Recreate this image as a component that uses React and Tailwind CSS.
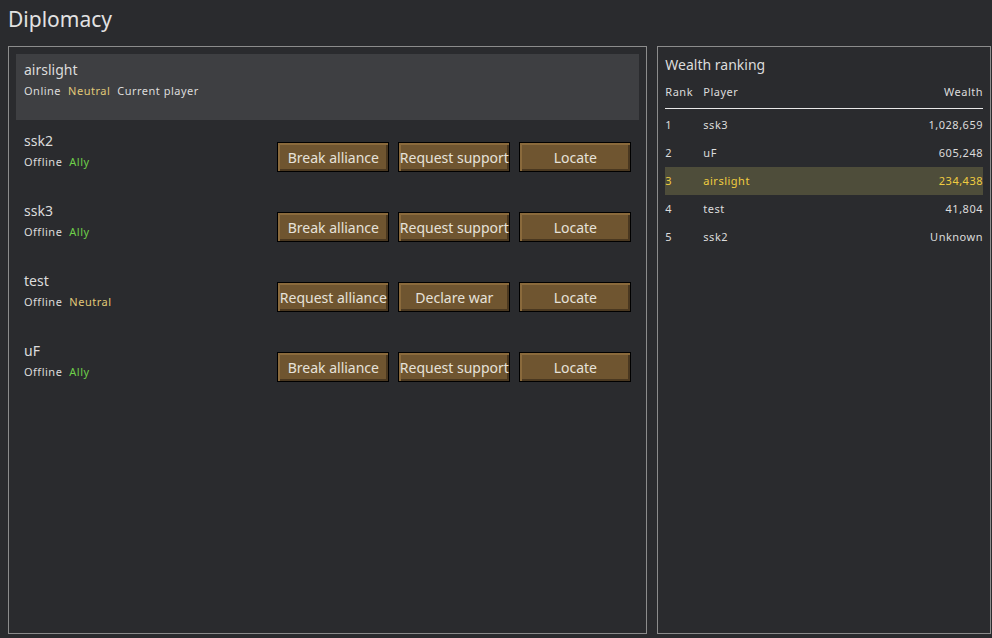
export default function App() {
  const players = [
    { name: "ssk2", rel: "Ally", btns: ["Break alliance", "Request support", "Locate"] },
    { name: "ssk3", rel: "Ally", btns: ["Break alliance", "Request support", "Locate"] },
    { name: "test", rel: "Neutral", btns: ["Request alliance", "Declare war", "Locate"] },
    { name: "uF", rel: "Ally", btns: ["Break alliance", "Request support", "Locate"] },
  ];
  const ranks = [
    ["1", "ssk3", "1,028,659"],
    ["2", "uF", "605,248"],
    ["3", "airslight", "234,438", true],
    ["4", "test", "41,804"],
    ["5", "ssk2", "Unknown"],
  ];
  const small = "text-[11px] font-['DejaVu_Sans',sans-serif] tracking-[0.5px]";
  return (
    <div className="w-[992px] h-[638px] bg-[#2a2b2e] text-[#dcdcdc] font-['Liberation_Sans',Arial,sans-serif] flex flex-col overflow-hidden">
      <div className="h-[46px] pl-[8px] pt-[6px] text-[21px] leading-[26px] text-[#e2e2e2]">Diplomacy</div>
      <div className="flex gap-[10px] pl-[8px] pr-[1px] h-[588px]">
        <div className="w-[640px] h-[588px] border border-[#8c8c8c] p-[7px] flex flex-col">
          <div className="h-[66px] bg-[#3e3f42] px-[8px] pt-[7px]">
            <div className="text-[14px] leading-[18px]">airslight</div>
            <div className={`${small} mt-[4px] flex gap-[7px]`}>
              <span>Online</span><span className="text-[#e0c878]">Neutral</span><span>Current player</span>
            </div>
          </div>
          {players.map((p) => (
            <div key={p.name} className="h-[70px] px-[8px] flex items-start">
              <div className="pt-[12px] flex-1">
                <div className="text-[14px] leading-[18px]">{p.name}</div>
                <div className={`${small} mt-[4px] flex gap-[7px]`}>
                  <span>Offline</span>
                  <span className={p.rel === "Ally" ? "text-[#6ed04a]" : "text-[#e0c878]"}>{p.rel}</span>
                </div>
              </div>
              <div className="flex gap-[9px] mt-[22px]">
                {p.btns.map((b) => (
                  <div key={b} className="w-[112px] h-[30px] border border-black bg-[#6f5530] shadow-[inset_2px_2px_0_#8a6a3c,inset_-2px_-2px_0_#4a3820] flex items-center justify-center text-[14px] text-[#e6e2da] whitespace-nowrap">{b}</div>
                ))}
              </div>
            </div>
          ))}
        </div>
        <div className="w-[334px] h-[588px] border border-[#8c8c8c] px-[7px] pt-[9px]">
          <div className="text-[14px] leading-[18px] text-[#dcdcdc]">Wealth ranking</div>
          <div className={`${small} flex h-[20px] items-center mt-[8px]`}>
            <span className="w-[38px]">Rank</span><span className="flex-1">Player</span><span>Wealth</span>
          </div>
          <div className="h-[1px] bg-[#e8e8e8] mt-[6px] mb-[2px]" />
          {ranks.map(([r, n, w, hl]) => (
            <div key={r} className={`${small} flex h-[28px] items-center ${hl ? "bg-[#4e4d3a] text-[#f0cc40]" : ""}`}>
              <span className="w-[38px]">{r}</span><span className="flex-1">{n}</span><span>{w}</span>
            </div>
          ))}
        </div>
      </div>
    </div>
  );
}
